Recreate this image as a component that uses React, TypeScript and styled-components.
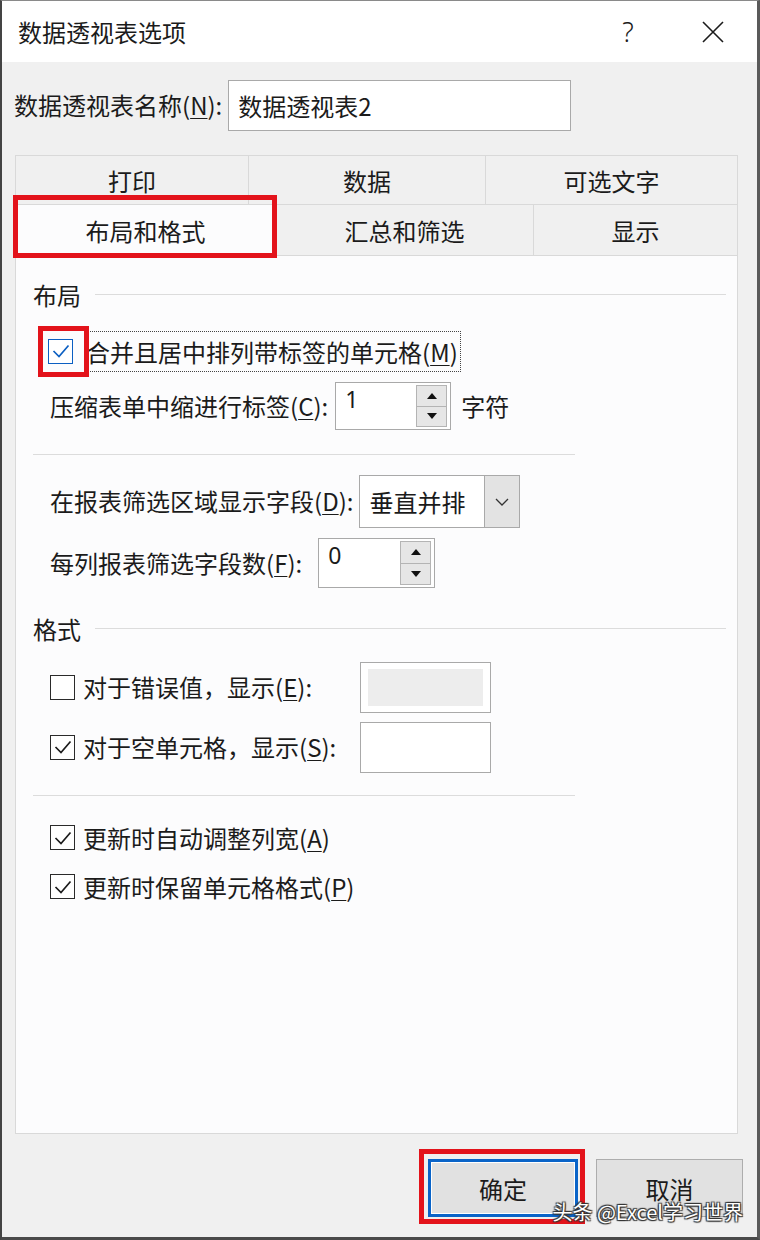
import React from 'react'
import styled, { createGlobalStyle } from 'styled-components'

const GlobalStyle = createGlobalStyle`
  html, body {
    margin: 0;
    padding: 0;
    background: #ffffff;
  }
  body {
    font-family: "Noto Sans CJK SC", "Noto Sans", sans-serif;
    color: #1b1b1b;
  }
  * {
    box-sizing: border-box;
  }
`

const Check = ({ color = '#1b1b1b' }: { color?: string }) => (
  <svg width="20" height="20" viewBox="0 0 20 20">
    <path d="M2.5 10 L8 15.5 L17.5 4.5" fill="none" stroke={color} strokeWidth="1.7" />
  </svg>
)

const Triangle = ({ up }: { up?: boolean }) => (
  <svg width="12" height="8" viewBox="0 0 12 8">
    <path d={up ? 'M1 7 L6 1 L11 7 Z' : 'M1 1 L6 7 L11 1 Z'} fill="#111" />
  </svg>
)

const Chevron = () => (
  <svg width="14" height="8" viewBox="0 0 14 8">
    <path d="M1 1 L7 7 L13 1" fill="none" stroke="#333" strokeWidth="1.3" />
  </svg>
)

const CheckBox = ({ checked, accent }: { checked?: boolean; accent?: boolean }) => (
  <Box $accent={accent}>{checked && <Check color={accent ? '#0b5fc2' : '#1b1b1b'} />}</Box>
)

const Spin = ({ value, width, height }: { value: string; width: number; height: number }) => (
  <SpinBox $w={width} $h={height}>
    <span>{value}</span>
    <SpinButtons>
      <SpinBtn><Triangle up /></SpinBtn>
      <SpinBtn><Triangle /></SpinBtn>
    </SpinButtons>
  </SpinBox>
)

const App = () => {
  return (
    <>
      <GlobalStyle />
      <Window>
        <TitleBar>
          <Title>数据透视表选项</Title>
          <Help>?</Help>
          <Close>
            <svg width="22" height="22" viewBox="0 0 22 22">
              <path d="M1 1 L21 21 M21 1 L1 21" stroke="#1b1b1b" strokeWidth="1.6" />
            </svg>
          </Close>
        </TitleBar>
        <Body>
          <NameRow>
            <Label>数据透视表名称(<U>N</U>):</Label>
            <NameInput>数据透视表2</NameInput>
          </NameRow>

          <Tabs>
            <TabRow>
              <Tab $w={234}>打印</Tab>
              <Tab $w={238}>数据</Tab>
              <Tab $w={253}>可选文字</Tab>
            </TabRow>
            <TabRow>
              <Tab $w={261} $active>
                布局和格式
                <Mark $t={-10} $l={-3} $r={-2} $b={-2} />
              </Tab>
              <Tab $w={259} $front>汇总和筛选</Tab>
              <Tab $w={205} $front>显示</Tab>
            </TabRow>
          </Tabs>

          <Panel>
            <Heading>
              <span>布局</span>
              <HeadLine />
            </Heading>

            <Row $mt={20} $indent={15} $h={44} $gap={12}>
              <Marked>
                <CheckBox checked accent />
                <Mark $t={-13} $l={-10} $r={-16} $b={-13} />
              </Marked>
              <Focus>合并且居中排列带标签的单元格(<U>M</U>)</Focus>
            </Row>

            <Row $mt={9} $h={48} $gap={7}>
              <Label>压缩表单中缩进行标签(<U>C</U>):</Label>
              <Spin value="1" width={116} height={48} />
              <Label style={{ marginLeft: 3 }}>字符</Label>
            </Row>

            <Separator $mt={24} />

            <Row $mt={20} $h={53} $gap={6}>
              <Label>在报表筛选区域显示字段(<U>D</U>):</Label>
              <Combo>
                <span>垂直并排</span>
                <ComboBtn><Chevron /></ComboBtn>
              </Combo>
            </Row>

            <Row $mt={10} $h={50} $gap={16}>
              <Label>每列报表筛选字段数(<U>F</U>):</Label>
              <Spin value="0" width={117} height={50} />
            </Row>

            <Heading $mt={25}>
              <span>格式</span>
              <HeadLine />
            </Heading>

            <Row $mt={19} $h={51} $gap={0}>
              <CheckLabel $w={310}>
                <CheckBox />
                <Label>对于错误值，显示(<U>E</U>):</Label>
              </CheckLabel>
              <TextBox $disabled />
            </Row>

            <Row $mt={9} $h={51} $gap={0}>
              <CheckLabel $w={310}>
                <CheckBox checked />
                <Label>对于空单元格，显示(<U>S</U>):</Label>
              </CheckLabel>
              <TextBox />
            </Row>

            <Separator $mt={22} />

            <Row $mt={27} $h={30}>
              <CheckLabel>
                <CheckBox checked />
                <Label>更新时自动调整列宽(<U>A</U>)</Label>
              </CheckLabel>
            </Row>

            <Row $mt={19} $h={30}>
              <CheckLabel>
                <CheckBox checked />
                <Label>更新时保留单元格格式(<U>P</U>)</Label>
              </CheckLabel>
            </Row>
          </Panel>

          <Footer>
            <Button $primary>
              确定
              <Mark $t={-13} $l={-12} $r={-10} $b={-10} />
            </Button>
            <Button>取消</Button>
            <Watermark>头条 @Excel学习世界</Watermark>
          </Footer>
        </Body>
      </Window>
    </>
  )
}

export default App

const Window = styled.div`
  width: 760px;
  height: 1240px;
  display: flex;
  flex-direction: column;
  border-top: 1px solid #8a8a8a;
  border-left: 2px solid #444;
  border-right: 3px solid #5a5a5a;
  border-bottom: 3px solid #4a4a4a;
  background: #f0f0f0;
`

const TitleBar = styled.div`
  height: 61px;
  flex: none;
  display: flex;
  align-items: center;
  background: #ffffff;
  padding-left: 16px;
`

const Title = styled.div`
  font-size: 24px;
  flex: 1;
`

const Help = styled.div`
  font-family: "Noto Sans", sans-serif;
  font-weight: 300;
  font-size: 27px;
  width: 30px;
  text-align: center;
  margin-right: 59px;
`

const Close = styled.div`
  width: 22px;
  height: 22px;
  margin-right: 33px;
  display: flex;
`

const Body = styled.div`
  flex: 1;
  display: flex;
  flex-direction: column;
  padding: 18px 0 0 13px;
  background: #f0f0f0;
`

const Label = styled.span`
  font-size: 24px;
  line-height: 1.2;
  white-space: nowrap;
  color: #1b1b1b;
`

const U = styled.span`
  text-decoration: underline;
  text-underline-offset: 3px;
  text-decoration-thickness: 1px;
`

const NameRow = styled.div`
  display: flex;
  align-items: center;
  gap: 6px;
  height: 51px;
  margin-left: -1px;
`

const NameInput = styled.div`
  width: 343px;
  height: 51px;
  border: 1px solid #a9a9a9;
  background: #ffffff;
  padding-left: 9px;
  display: flex;
  align-items: center;
  font-size: 24px;
`

const Tabs = styled.div`
  margin-top: 24px;
  width: 723px;
`

const TabRow = styled.div`
  display: flex;
  height: 50px;
`

const Tab = styled.div<{ $w: number; $active?: boolean; $front?: boolean }>`
  position: relative;
  width: ${(p) => p.$w}px;
  height: ${(p) => (p.$active || p.$front ? 51 : 50)}px;
  margin-left: -1px;
  &:first-child {
    margin-left: 0;
  }
  display: flex;
  align-items: center;
  justify-content: center;
  font-size: 24px;
  border: 1px solid #d9d9d9;
  border-bottom: ${(p) => (p.$active ? 'none' : '1px solid #d9d9d9')};
  border-top: ${(p) => (p.$active || p.$front ? 'none' : '1px solid #d9d9d9')};
  background: ${(p) => (p.$active ? '#fcfcfd' : '#f0f0f0')};
  z-index: ${(p) => (p.$active ? 2 : 1)};
`

const Mark = styled.span<{ $t: number; $l: number; $r: number; $b: number }>`
  position: absolute;
  top: ${(p) => p.$t}px;
  left: ${(p) => p.$l}px;
  right: ${(p) => p.$r}px;
  bottom: ${(p) => p.$b}px;
  border: 5px solid #e3131b;
  pointer-events: none;
  z-index: 5;
`

const Panel = styled.div`
  width: 723px;
  height: 879px;
  background: #fcfcfd;
  border: 1px solid #d9d9d9;
  border-top: none;
  padding: 24px 11px 0 17px;
  display: flex;
  flex-direction: column;
`

const Heading = styled.div<{ $mt?: number }>`
  display: flex;
  align-items: center;
  gap: 14px;
  height: 30px;
  margin-top: ${(p) => p.$mt ?? 0}px;
  font-size: 24px;
`

const HeadLine = styled.div`
  flex: 1;
  height: 1px;
  background: #dcdcdc;
`

const Separator = styled.div<{ $mt: number }>`
  width: 542px;
  height: 1px;
  background: #dcdcdc;
  margin-top: ${(p) => p.$mt}px;
  flex: none;
`

const Row = styled.div<{ $mt: number; $h: number; $indent?: number; $gap?: number }>`
  display: flex;
  align-items: center;
  flex: none;
  height: ${(p) => p.$h}px;
  margin-top: ${(p) => p.$mt}px;
  margin-left: ${(p) => p.$indent ?? 17}px;
  gap: ${(p) => p.$gap ?? 14}px;
`

const Box = styled.div<{ $accent?: boolean }>`
  width: 25px;
  height: 25px;
  flex: none;
  border: 1.5px solid ${(p) => (p.$accent ? '#0b5fc2' : '#2a2a2a')};
  background: #ffffff;
  display: flex;
  align-items: center;
  justify-content: center;
`

const Marked = styled.div`
  position: relative;
  display: flex;
`

const Focus = styled.div`
  height: 41px;
  display: flex;
  align-items: center;
  padding: 0 2px 0 0;
  border: 1px dotted #444;
  font-size: 24px;
  white-space: nowrap;
`

const CheckLabel = styled.div<{ $w?: number }>`
  display: flex;
  align-items: center;
  gap: 8px;
  width: ${(p) => (p.$w ? `${p.$w}px` : 'auto')};
  flex: none;
`

const SpinBox = styled.div<{ $w: number; $h: number }>`
  width: ${(p) => p.$w}px;
  height: ${(p) => p.$h}px;
  border: 1px solid #a9a9a9;
  background: #ffffff;
  display: flex;
  align-items: flex-start;
  justify-content: space-between;
  padding: 2px 3px 2px 9px;
  font-family: "Noto Sans", sans-serif;
  font-size: 23px;
  line-height: 1.3;
`

const SpinButtons = styled.div`
  display: flex;
  flex-direction: column;
  height: 100%;
  width: 31px;
`

const SpinBtn = styled.div`
  flex: 1;
  display: flex;
  align-items: center;
  justify-content: center;
  background: #e6e6e6;
  border: 1px solid #b4b4b4;
  & + & {
    border-top: none;
  }
`

const Combo = styled.div`
  width: 161px;
  height: 53px;
  border: 1px solid #a9a9a9;
  background: #ffffff;
  display: flex;
  align-items: center;
  justify-content: space-between;
  padding-left: 9px;
  font-size: 24px;
`

const ComboBtn = styled.div`
  width: 35px;
  height: 100%;
  background: #e3e3e3;
  border-left: 1px solid #a9a9a9;
  display: flex;
  align-items: center;
  justify-content: center;
`

const TextBox = styled.div<{ $disabled?: boolean }>`
  width: 131px;
  height: 51px;
  border: 1px solid #a9a9a9;
  background: #ffffff;
  padding: ${(p) => (p.$disabled ? '6px 7px' : '0')};
  &::before {
    content: '';
    display: ${(p) => (p.$disabled ? 'block' : 'none')};
    width: 100%;
    height: 100%;
    background: #ededed;
  }
`

const Footer = styled.div`
  position: relative;
  display: flex;
  justify-content: flex-end;
  gap: 18px;
  padding: 25px 14px 0 0;
`

const Button = styled.div<{ $primary?: boolean }>`
  position: relative;
  width: ${(p) => (p.$primary ? 150 : 147)}px;
  height: 58px;
  display: flex;
  align-items: center;
  justify-content: center;
  font-size: 24px;
  background: #e1e1e1;
  border: ${(p) => (p.$primary ? '3px solid #0a64c8' : '1px solid #adadad')};
  box-shadow: ${(p) => (p.$primary ? 'inset 0 0 0 1px #ffffff' : 'none')};
`

const Watermark = styled.div`
  position: absolute;
  right: 14px;
  top: 67px;
  font-family: "Noto Sans CJK SC", sans-serif;
  font-size: 20px;
  line-height: 1.1;
  color: #ffffff;
  text-shadow: 1px 1px 1px #333, -1px -1px 1px #333, 1px -1px 1px #333, -1px 1px 1px #333;
  white-space: nowrap;
  z-index: 6;
`
